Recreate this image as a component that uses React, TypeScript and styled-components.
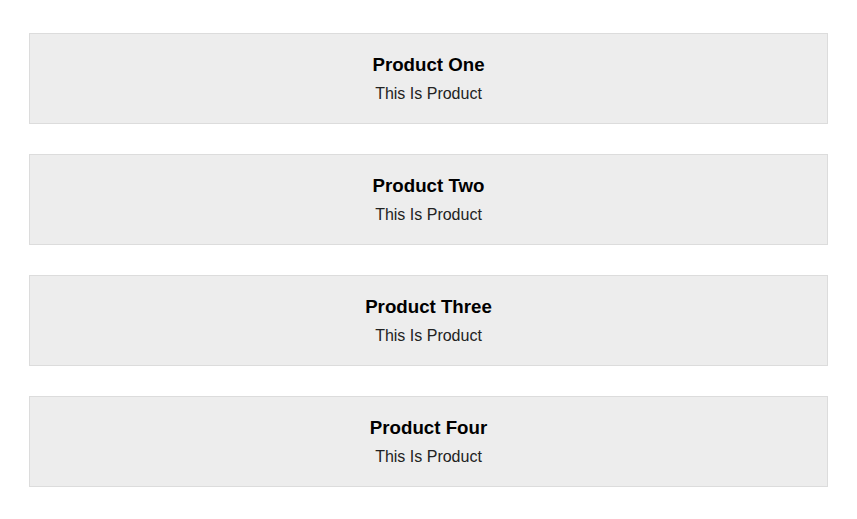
import React from "react";
import styled, { createGlobalStyle } from "styled-components";

const GlobalStyle = createGlobalStyle`
  html, body {
    margin: 0;
    padding: 0;
    background: #ffffff;
    font-family: "Liberation Sans", Arial, sans-serif;
  }
`;

const List = styled.div`
  display: flex;
  flex-direction: column;
  gap: 30px;
  padding: 33px 29px 32px;
`;

const Card = styled.div`
  background: #ededed;
  border: 1px solid #dcdcdc;
  padding: 20px 0 20px;
  text-align: center;
`;

const Title = styled.h3`
  margin: 0 0 10px;
  font-size: 18.7px;
  line-height: 21px;
  font-weight: 700;
  color: #000;
`;

const Subtitle = styled.p`
  margin: 0;
  font-size: 16px;
  line-height: 18px;
  color: #222;
`;

const products = ["Product One", "Product Two", "Product Three", "Product Four"];

export default function App() {
  return (
    <>
      <GlobalStyle />
      <List>
        {products.map((p) => (
          <Card key={p}>
            <Title>{p}</Title>
            <Subtitle>This Is Product</Subtitle>
          </Card>
        ))}
      </List>
    </>
  );
}
